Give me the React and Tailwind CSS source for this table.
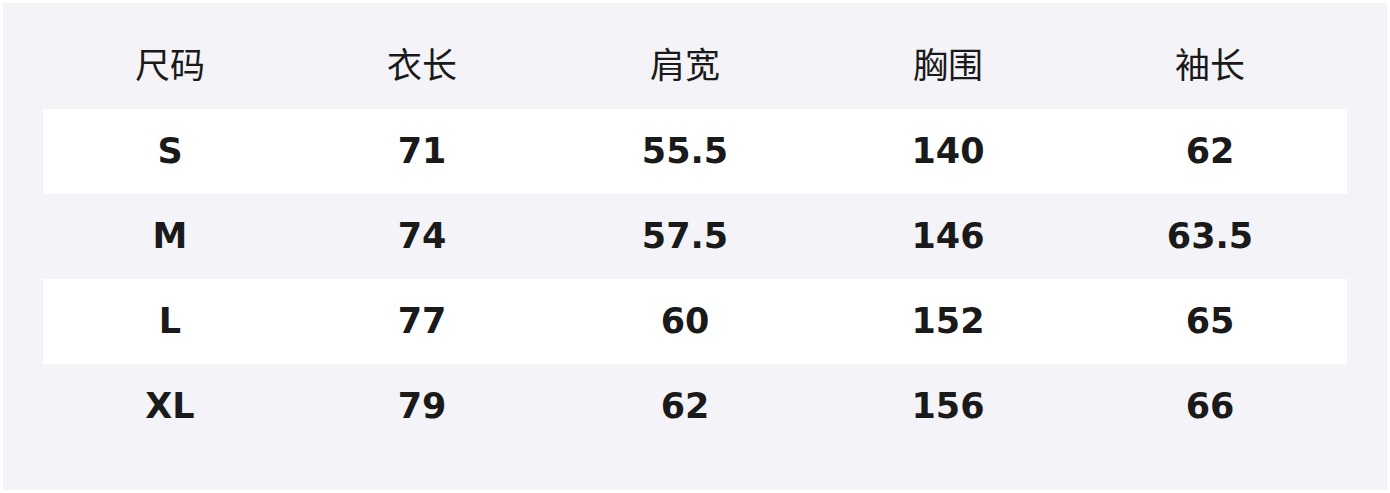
const headers = ['尺码', '衣长', '肩宽', '胸围', '袖长'];

const rows = [
  ['S', '71', '55.5', '140', '62'],
  ['M', '74', '57.5', '146', '63.5'],
  ['L', '77', '60', '152', '65'],
  ['XL', '79', '62', '156', '66'],
];

const cols = 'grid grid-cols-[254px_250px_276px_250px_274px]';

const App = () => {
  return (
    <div className="w-[1390px] h-[493px] bg-white p-[3px]">
      <div className="h-[487px] bg-[#f4f4f8] px-[40px] pt-[21px]">
        <div className={`${cols} h-[85px] pb-[6px] items-center text-center`}>
          {headers.map((h) => (
            <div
              key={h}
              className="text-[35px] text-[#1a1a1a] font-['Noto_Sans_CJK_SC','Noto_Sans',sans-serif]"
            >
              {h}
            </div>
          ))}
        </div>
        {rows.map((row, i) => (
          <div
            key={row[0]}
            className={`${cols} h-[85px] items-center text-center ${
              i % 2 === 0 ? 'bg-white' : ''
            }`}
          >
            {row.map((cell, j) => (
              <div
                key={j}
                className="text-[35px] font-bold text-[#1a1a1a] font-['DejaVu_Sans',sans-serif]"
              >
                {cell}
              </div>
            ))}
          </div>
        ))}
      </div>
    </div>
  );
};

export default App;
